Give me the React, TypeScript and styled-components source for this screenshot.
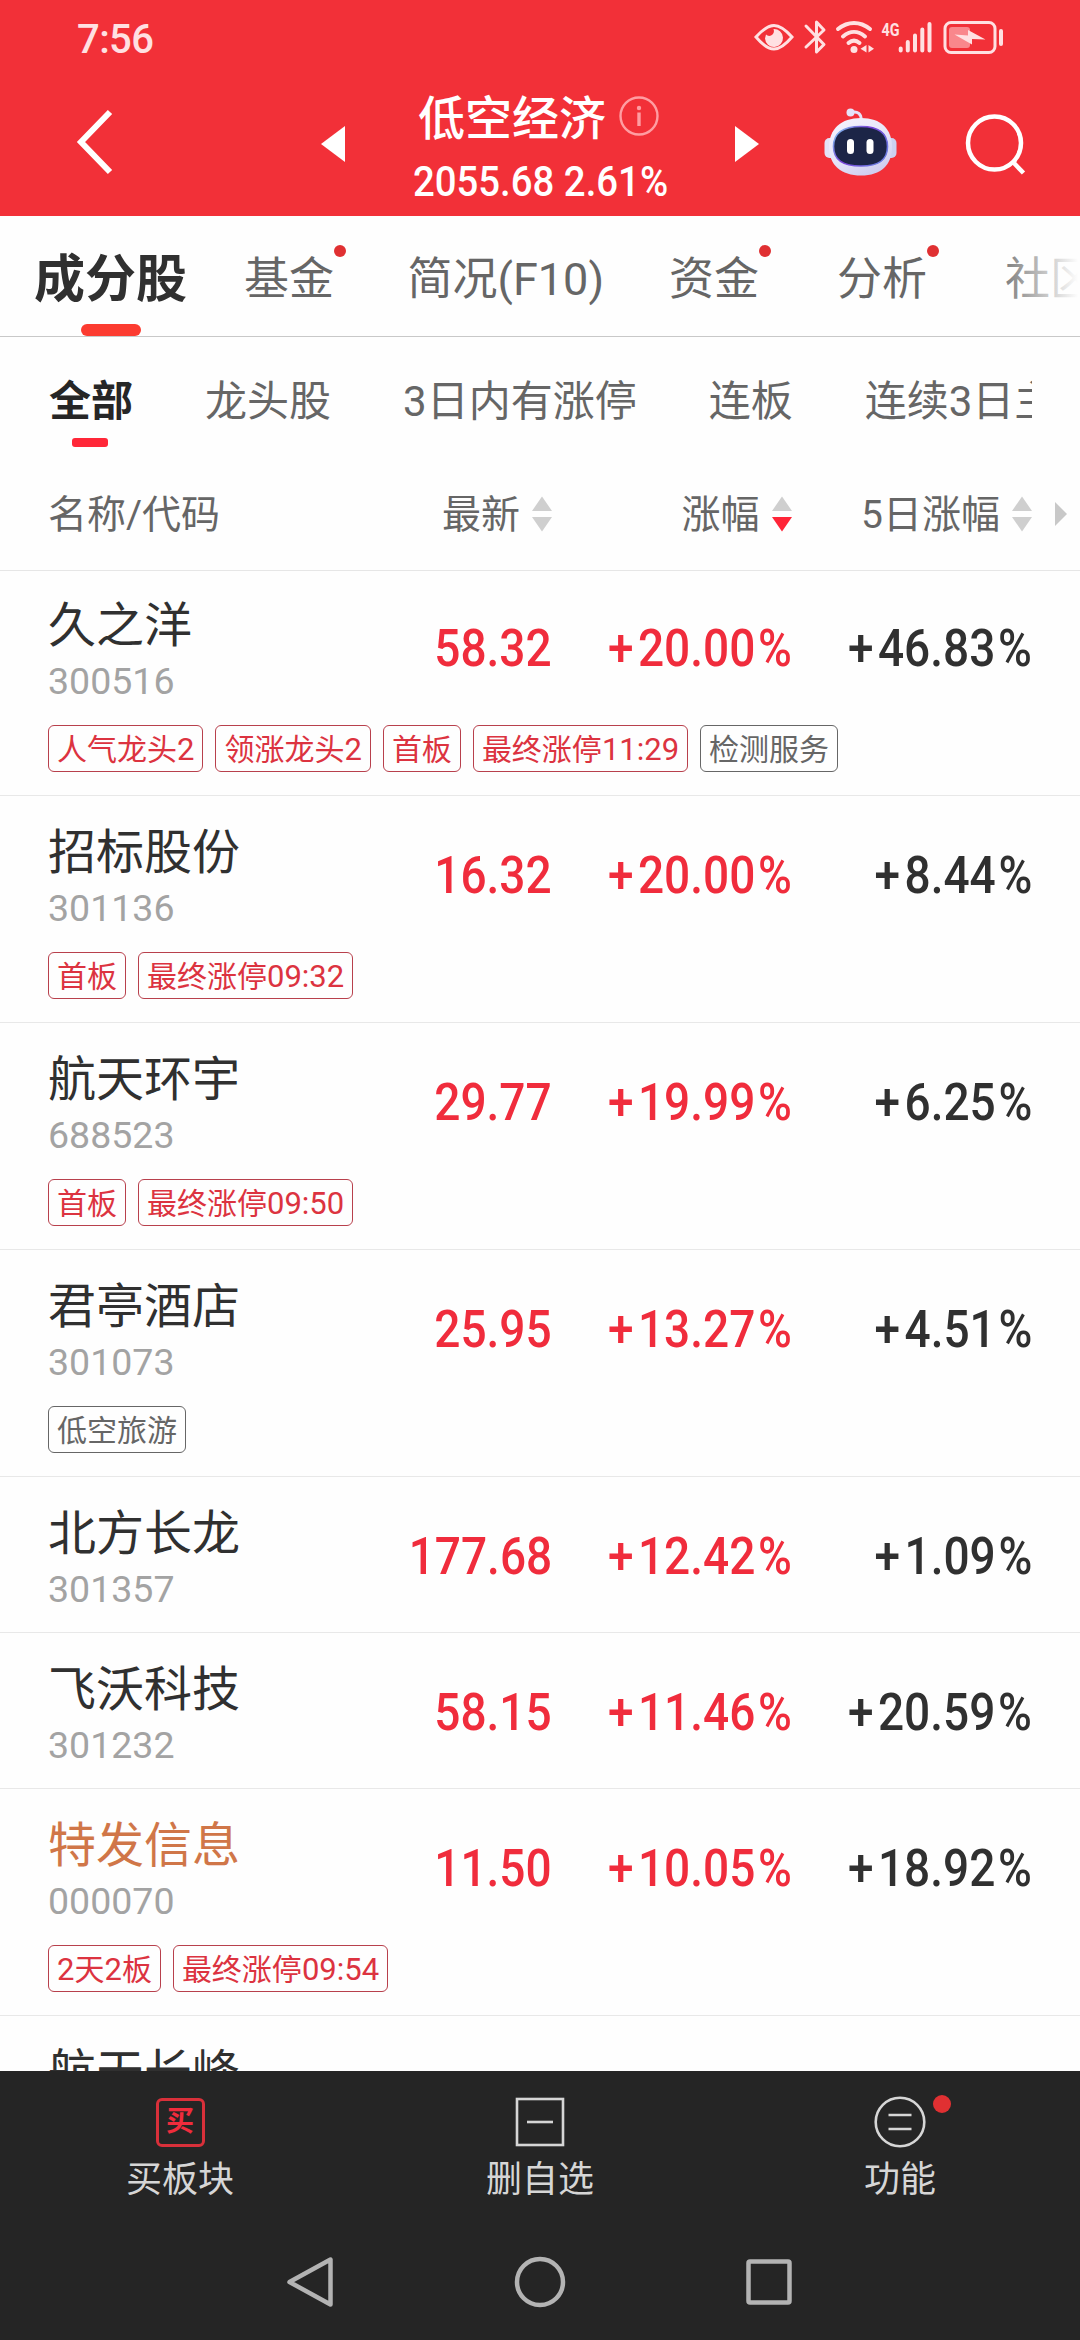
import React from 'react';
import styled, { createGlobalStyle } from 'styled-components';

const GlobalStyle = createGlobalStyle`
  * { box-sizing: border-box; }
  html, body { margin: 0; padding: 0; }
  body { background: #fff; font-family: Roboto, "Noto Sans CJK SC", sans-serif; width: 1080px; overflow-x: hidden; }
`;

const Screen = styled.div`
  width: 1080px;
  height: 2340px;
  display: flex;
  flex-direction: column;
  background: #fefefe;
  overflow: hidden;
`;

const Top = styled.header`
  height: 216px;
  flex: none;
  background: #f23038;
  color: #fff;
`;

const StatusBar = styled.div`
  height: 76px;
  padding: 0 78px 0 77px;
  display: flex;
  align-items: center;
  justify-content: space-between;
  color: #ffe0e2;
`;

const Clock = styled.span`
  font-size: 40px;
  line-height: 76px;
  padding-top: 3px;
  font-weight: 500;
  letter-spacing: -0.6px;
`;

const StatusIcons = styled.svg`
  display: block;
  margin-right: -2px;
`;

const TitleBar = styled.div`
  height: 140px;
  display: grid;
  grid-template-columns: 321px 24px 390px 24px 65px 73px 1fr;
  align-items: center;
`;

const IconCell = styled.div<{ $pad?: number; $lift?: number }>`
  padding-left: ${(p) => p.$pad ?? 0}px;
  padding-bottom: ${(p) => p.$lift ?? 0}px;
  svg { display: block; }
`;

const TitleBlock = styled.div`
  padding-left: 67px;
  height: 140px;
`;

const TitleLine = styled.div`
  display: flex;
  align-items: center;
  gap: 13px;
  height: 81px;
  padding-top: 4px;
  padding-left: 6px;
  font-size: 47px;
  font-weight: 500;
  line-height: 80px;
  svg { display: block; margin-top: -5px; }
`;

const Quote = styled.div`
  font-size: 42px;
  line-height: 50px;
  font-weight: 500;
  white-space: nowrap;
  width: max-content;
  padding-left: 1px;
  transform: scaleX(0.913);
  transform-origin: 0 50%;
`;

const Tabs = styled.nav`
  height: 121px;
  flex: none;
  display: flex;
  align-items: flex-start;
  padding-left: 34px;
  gap: 77px;
  border-bottom: 1px solid #c8c8c8;
  overflow: hidden;
  position: relative;
  &::after {
    content: '';
    position: absolute;
    right: 0;
    top: 0;
    width: 90px;
    height: 119px;
    background: linear-gradient(90deg, rgba(254, 254, 254, 0), #fefefe 98%);
  }
`;

const Tab = styled.div<{ $active?: boolean; $shift?: number }>`
  position: relative;
  flex: none;
  height: 120px;
  line-height: 128px;
  white-space: nowrap;
  font-size: ${(p) => (p.$active ? 51 : 45)}px;
  font-weight: ${(p) => (p.$active ? 700 : 400)};
  margin-right: ${(p) => p.$shift ?? 0}px;
  color: ${(p) => (p.$active ? '#303030' : '#666')};
  &::after {
    content: '';
    display: ${(p) => (p.$active ? 'block' : 'none')};
    position: absolute;
    left: 47px;
    bottom: 0;
    width: 60px;
    height: 12px;
    border-radius: 6px;
    background: #fc3b30;
  }
`;

const Dot = styled.i<{ $size: number; $right: number; $top: number }>`
  position: absolute;
  width: ${(p) => p.$size}px;
  height: ${(p) => p.$size}px;
  right: ${(p) => p.$right}px;
  top: ${(p) => p.$top}px;
  border-radius: 50%;
  background: #e03032;
`;

const Filters = styled.nav`
  height: 126px;
  flex: none;
  display: flex;
  gap: 72px;
  margin-left: 49px;
  width: 983px;
  overflow: hidden;
`;

const Filter = styled.div<{ $active?: boolean }>`
  position: relative;
  flex: none;
  white-space: nowrap;
  font-size: 42px;
  line-height: 129px;
  font-weight: ${(p) => (p.$active ? 700 : 400)};
  color: ${(p) => (p.$active ? '#262626' : '#666')};
  &::after {
    content: '';
    display: ${(p) => (p.$active ? 'block' : 'none')};
    position: absolute;
    left: 23px;
    top: 101px;
    width: 36px;
    height: 9px;
    border-radius: 3px;
    background: #ff2738;
  }
`;

const columns = '311px 193px 239.5px 240.5px 1fr';

const HeadRow = styled.div`
  height: 108px;
  flex: none;
  display: grid;
  grid-template-columns: ${columns};
  align-items: center;
  padding-left: 48px;
  border-bottom: 1px solid #e6e6e6;
  font-size: 39px;
  line-height: 58px;
  padding-bottom: 5px;
  color: #666;
`;

const HeadCell = styled.div<{ $end?: boolean }>`
  display: flex;
  align-items: center;
  gap: 12px;
  white-space: nowrap;
  padding-top: 2px;
  justify-content: ${(p) => (p.$end ? 'flex-end' : 'flex-start')};
  svg { margin-top: -2px; }
`;

const List = styled.main`
  flex: 1;
  min-height: 0;
  overflow: hidden;
`;

const Row = styled.section<{ $first?: boolean; $last?: boolean }>`
  border-bottom: ${(p) => (p.$last ? 'none' : '1px solid #e8e8e8')};
  margin-top: ${(p) => (p.$first ? -2 : 0)}px;
`;

const RowMain = styled.div<{ $tagged: boolean }>`
  height: ${(p) => (p.$tagged ? 156 : 155)}px;
  display: grid;
  grid-template-columns: ${columns};
  padding-left: 48px;
`;

const Name = styled.div<{ $accent?: boolean }>`
  font-size: 48px;
  line-height: 58px;
  padding-top: 28px;
  white-space: nowrap;
  color: ${(p) => (p.$accent ? '#d07648' : '#303030')};
`;

const Code = styled.div`
  font-size: 37.5px;
  line-height: 52px;
  color: #a3a3a3;
`;

const Num = styled.div<{ $up?: boolean }>`
  justify-self: end;
  font-size: 52px;
  font-weight: 500;
  line-height: 159px;
  transform: scaleX(0.885);
  transform-origin: 100% 50%;
  white-space: nowrap;
  color: ${(p) => (p.$up ? '#f02c3c' : '#303030')};
`;

const Sign = styled.span`
  letter-spacing: 5px;
`;

const Percent = styled.span`
  margin-left: 3px;
`;

const Tags = styled.div`
  display: flex;
  gap: 12px;
  padding: 0 48px 23px;
`;

const Tag = styled.span<{ $muted?: boolean }>`
  height: 47px;
  padding: 0 8px;
  border: 1px solid ${(p) => (p.$muted ? '#666' : '#b8404c')};
  border-radius: 6px;
  font-size: 30px;
  line-height: 48px;
  white-space: nowrap;
  color: ${(p) => (p.$muted ? '#666' : '#dc3340')};
`;

const Digits = styled.span`
  font-size: 31px;
`;

const Bottom = styled.footer`
  height: 269px;
  flex: none;
  background: #252525;
  color: #d6d6d6;
`;

const Actions = styled.div`
  height: 149px;
  display: grid;
  grid-template-columns: repeat(3, 1fr);
`;

const Action = styled.div`
  display: flex;
  flex-direction: column;
  align-items: center;
  padding-top: 24px;
  font-size: 36px;
  line-height: 54px;
`;

const ActionIcon = styled.div`
  position: relative;
  width: 54px;
  height: 54px;
  display: flex;
  align-items: center;
  justify-content: center;
  margin-bottom: 4px;
`;

const BuyBadge = styled.div`
  width: 49px;
  height: 49px;
  border: 3px solid #d9303a;
  border-radius: 6px;
  color: #f02c3c;
  font-size: 28px;
  font-weight: 700;
  line-height: 42px;
  text-align: center;
`;

const SystemNav = styled.div`
  height: 120px;
  display: flex;
  justify-content: center;
  align-items: center;
  gap: 175px;
  padding-top: 3px;
  svg { display: block; }
`;

const Sort = ({ down }: { down?: boolean }) => (
  <svg width="20" height="36" viewBox="0 0 20 36">
    <path d="M10 0.5L20 15H0z" fill="#cfcfcf" />
    <path d="M10 35.5L20 21H0z" fill={down ? '#ff2538' : '#cfcfcf'} />
  </svg>
);

const StatusGlyphs = () => (
  <StatusIcons width="252" height="40" viewBox="750 17 252 40" fill="none" stroke="#ffe0e2">
    <path d="M754 36C762 27 767 24.500 772 24.500s10 2.500 18 11.500C782 45.500 777 48 772 48s-10-2.500-18-12z" strokeWidth="3" />
    <path d="M771.500 28a9 9 0 1 1-8.500 9.500l1-4a4.500 4.500 0 0 0 6.500 0c1.500-1.500 1.800-3.500 1-5.500z" fill="#ffe0e2" stroke="none" />
    <path d="M804 25L822 43.500L814.500 51V21L822 29L804 46" strokeWidth="3" strokeLinejoin="round" strokeLinecap="round" />
    <path d="M836 28C846 20 858 20 868 28M841 35.500C848 29.500 856 29.500 863 35.500M846.500 42C850 39 854 39 857.500 42" strokeWidth="4" strokeLinecap="round" />
    <circle cx="852" cy="48.500" r="3.500" fill="#ffe0e2" stroke="none" />
    <path d="M864.500 44v7.500l-6-3.700zM866.500 44v7.500l5.500-3.700z" fill="#ffe0e2" stroke="none" />
    <text x="879.500" y="34.500" fontSize="19" fontWeight="700" fill="#ffe0e2" stroke="none" textLength="18" lengthAdjust="spacingAndGlyphs">4G</text>
    <path d="M898.700 47.500V49.500M905.800 41V49.500M913 34.500V49.500M920.300 28.500V49.500M927.500 23V49.500" strokeWidth="4" strokeLinecap="round" />
    <rect x="943" y="21.500" width="50" height="30" rx="6" strokeWidth="3" />
    <rect x="947" y="26" width="21" height="21" rx="3" fill="#f9878c" stroke="none" />
    <path d="M952.500 33.500l13.500 1V29l17.500 9.500-13.500 -0.500V43.500z" fill="#ffe0e2" stroke="none" />
    <path d="M999 30V43" strokeWidth="4" strokeLinecap="round" />
  </StatusIcons>
);

const Robot = () => (
  <svg width="73" height="68" viewBox="0 0 73 68">
    <defs>
      <linearGradient id="shell" x1="0" y1="0" x2="0.6" y2="1">
        <stop offset="0" stopColor="#f6f4fd" />
        <stop offset="0.6" stopColor="#e6e4f8" />
        <stop offset="1" stopColor="#d0cff0" />
      </linearGradient>
      <linearGradient id="rim" x1="0" y1="0" x2="1" y2="0.6">
        <stop offset="0" stopColor="#7fd0f0" />
        <stop offset="0.5" stopColor="#7a40d8" />
        <stop offset="1" stopColor="#6a78e0" />
      </linearGradient>
    </defs>
    <path d="M27 4.500C34 3 37.500 6 37 12" fill="none" stroke="#e6e2f8" strokeWidth="3" />
    <circle cx="26.500" cy="4.500" r="4" fill="#e6e2f8" />
    <rect x="0.500" y="30" width="12" height="20" rx="5" fill="#e4e2f7" />
    <rect x="60.500" y="30" width="12" height="20" rx="5" fill="#ccd0f0" />
    <path d="M37 10C57 10 68 21 68 39S57 67.500 37 67.500S5 57 5 39S17 10 37 10z" fill="url(#shell)" />
    <path d="M37 18.500C55 18.500 63.500 25 63.500 38.500S55 58 37 58S9.500 52 9.500 38.500S19 18.500 37 18.500z" fill="#1c2547" stroke="url(#rim)" strokeWidth="1.600" />
    <rect x="23" y="31" width="7" height="15" rx="3.500" fill="#fff" />
    <rect x="42.500" y="31" width="7" height="15" rx="3.500" fill="#fff" />
  </svg>
);

type Stock = { name: string; code: string; price: string; change: string; five: string; tags?: string[]; muted?: string[]; accent?: boolean };

const stocks: Stock[] = [
  { name: '久之洋', code: '300516', price: '58.32', change: '20.00', five: '46.83', tags: ['人气龙头2', '领涨龙头2', '首板', '最终涨停11:29'], muted: ['检测服务'] },
  { name: '招标股份', code: '301136', price: '16.32', change: '20.00', five: '8.44', tags: ['首板', '最终涨停09:32'] },
  { name: '航天环宇', code: '688523', price: '29.77', change: '19.99', five: '6.25', tags: ['首板', '最终涨停09:50'] },
  { name: '君亭酒店', code: '301073', price: '25.95', change: '13.27', five: '4.51', muted: ['低空旅游'] },
  { name: '北方长龙', code: '301357', price: '177.68', change: '12.42', five: '1.09' },
  { name: '飞沃科技', code: '301232', price: '58.15', change: '11.46', five: '20.59' },
  { name: '特发信息', code: '000070', price: '11.50', change: '10.05', five: '18.92', tags: ['2天2板', '最终涨停09:54'], accent: true },
];

const TagText = ({ text }: { text: string }) => (
  <>{text.split(/([\d:]+)/).map((part, i) => (i % 2 ? <Digits key={i}>{part}</Digits> : part))}</>
);

const Change = ({ value, up }: { value: string; up?: boolean }) => (
  <Num $up={up}><Sign>+</Sign>{value}<Percent>%</Percent></Num>
);

const StockRow = ({ stock, first }: { stock: Stock; first?: boolean }) => {
  const tagged = Boolean(stock.tags || stock.muted);
  return (
    <Row $first={first}>
      <RowMain $tagged={tagged}>
        <div>
          <Name $accent={stock.accent}>{stock.name}</Name>
          <Code>{stock.code}</Code>
        </div>
        <Num $up>{stock.price}</Num>
        <Change up value={stock.change} />
        <Change value={stock.five} />
      </RowMain>
      {tagged && (
        <Tags>
          {stock.tags?.map((t) => <Tag key={t}><TagText text={t} /></Tag>)}
          {stock.muted?.map((t) => <Tag key={t} $muted>{t}</Tag>)}
        </Tags>
      )}
    </Row>
  );
};

export default function App() {
  return (
    <>
      <GlobalStyle />
      <Screen>
        <Top>
          <StatusBar>
            <Clock>7:56</Clock>
            <StatusGlyphs />
          </StatusBar>
          <TitleBar>
            <IconCell $pad={75} $lift={9}>
              <svg width="40" height="68" viewBox="0 0 40 68"><path d="M35 4L6 34L35 64" fill="none" stroke="#fff" strokeWidth="6" /></svg>
            </IconCell>
            <IconCell $lift={4}>
              <svg width="24" height="36" viewBox="0 0 24 36"><path d="M24 0V36L0 18z" fill="#fff" /></svg>
            </IconCell>
            <TitleBlock>
              <TitleLine>
                低空经济
                <svg width="40" height="40" viewBox="0 0 40 40">
                  <circle cx="20" cy="20" r="18.500" fill="none" stroke="#ff9da2" strokeWidth="2.400" />
                  <circle cx="20" cy="12" r="2.200" fill="#ff9da2" />
                  <path d="M20 16.500V30" stroke="#ff9da2" strokeWidth="3.400" />
                </svg>
              </TitleLine>
              <Quote>2055.68 2.61%</Quote>
            </TitleBlock>
            <IconCell $lift={4}>
              <svg width="24" height="36" viewBox="0 0 24 36"><path d="M0 0V36L24 18z" fill="#fff" /></svg>
            </IconCell>
            <span />
            <IconCell $lift={9}><Robot /></IconCell>
            <IconCell $pad={67} $lift={4}>
              <svg width="62" height="64" viewBox="0 0 62 64" fill="none" stroke="#fff" strokeWidth="4.500">
                <circle cx="30.500" cy="31" r="26.500" />
                <path d="M49 50L59.500 61" />
              </svg>
            </IconCell>
          </TitleBar>
        </Top>
        <Tabs>
          <Tab $active $shift={-20}>成分股</Tab>
          <Tab $shift={-3.5}>基金<Dot $size={12} $right={-12} $top={29} /></Tab>
          <Tab $shift={-12}>简况(F10)</Tab>
          <Tab $shift={1}>资金<Dot $size={12} $right={-12} $top={29} /></Tab>
          <Tab $shift={1}>分析<Dot $size={12} $right={-12} $top={29} /></Tab>
          <Tab>社区</Tab>
        </Tabs>
        <Filters>
          <Filter $active>全部</Filter>
          <Filter>龙头股</Filter>
          <Filter>3日内有涨停</Filter>
          <Filter>连板</Filter>
          <Filter>连续3日主力</Filter>
        </Filters>
        <HeadRow>
          <HeadCell>名称/代码</HeadCell>
          <HeadCell $end>最新<Sort /></HeadCell>
          <HeadCell $end>涨幅<Sort down /></HeadCell>
          <HeadCell $end>5日涨幅<Sort /></HeadCell>
          <IconCell $pad={23}>
            <svg width="12" height="24" viewBox="0 0 12 24"><path d="M0 0V24L12 12z" fill="#c8c8c8" /></svg>
          </IconCell>
        </HeadRow>
        <List>
          {stocks.map((s, i) => <StockRow key={s.code} stock={s} first={i === 0} />)}
          <Row $last>
            <RowMain $tagged={false}>
              <Name>航天长峰</Name>
            </RowMain>
          </Row>
        </List>
        <Bottom>
          <Actions>
            <Action>
              <ActionIcon><BuyBadge>买</BuyBadge></ActionIcon>
              买板块
            </Action>
            <Action>
              <ActionIcon>
                <svg width="50" height="50" viewBox="0 0 50 50" fill="none" stroke="#d6d6d6" strokeWidth="2.600">
                  <rect x="2" y="2" width="46" height="46" />
                  <path d="M12 25H38" />
                </svg>
              </ActionIcon>
              删自选
            </Action>
            <Action>
              <ActionIcon>
                <svg width="52" height="52" viewBox="0 0 52 52" fill="none" stroke="#d6d6d6" strokeWidth="2.600">
                  <circle cx="26" cy="26" r="24.300" />
                  <path d="M14.500 19H37.500M14.500 33H37.500" />
                </svg>
                <Dot $size={18} $right={-24} $top={0} />
              </ActionIcon>
              功能
            </Action>
          </Actions>
          <SystemNav>
            <svg width="54" height="54" viewBox="0 0 54 54"><path d="M46.500 4.500V49.500L5.500 27z" fill="none" stroke="#b3b3b3" strokeWidth="4.500" strokeLinejoin="round" /></svg>
            <svg width="54" height="54" viewBox="0 0 54 54"><circle cx="27" cy="27" r="23" fill="none" stroke="#b3b3b3" strokeWidth="4.500" /></svg>
            <svg width="54" height="54" viewBox="0 0 54 54"><rect x="6.500" y="6.500" width="41" height="41" rx="1.500" fill="none" stroke="#b3b3b3" strokeWidth="4.500" /></svg>
          </SystemNav>
        </Bottom>
      </Screen>
    </>
  );
}
